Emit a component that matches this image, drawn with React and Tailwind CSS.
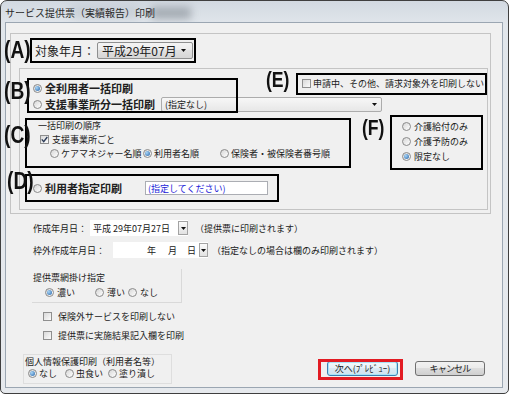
import React from "react";

const JP = "font-['Noto_Sans_CJK_JP','Noto_Sans',sans-serif]";

function Radio({ checked }) {
  return (
    <span className="inline-flex h-[9px] w-[9px] shrink-0 items-center justify-center rounded-full border border-[#8a8a8a] bg-[linear-gradient(135deg,#d6d6d6,#ffffff)]">
      {checked && (
        <span className="h-[5px] w-[5px] rounded-full bg-[radial-gradient(circle_at_35%_35%,#a9d6f7,#2563a8)]" />
      )}
    </span>
  );
}

function Check({ checked }) {
  return (
    <span className="inline-flex h-[9px] w-[9px] shrink-0 items-center justify-center border border-[#8f8f8f] bg-[linear-gradient(135deg,#d9d9d9,#fbfbfb)]">
      {checked && (
        <svg width="7" height="7" viewBox="0 0 7 7">
          <path d="M0.8 3.4 L2.7 5.6 L6.3 1" fill="none" stroke="#2c3b57" strokeWidth="1.4" />
        </svg>
      )}
    </span>
  );
}

function Arrow() {
  return (
    <svg width="5" height="3" viewBox="0 0 5 3">
      <path d="M0 0H5L2.5 3Z" fill="#111" />
    </svg>
  );
}

function DropBtn({ w = "w-[10px]" }) {
  return (
    <span className={`ml-auto flex h-[14px] ${w} items-center justify-center border border-[#a3a3a3] bg-[linear-gradient(#fbfbfb,#e2e2e2)]`}>
      <Arrow />
    </span>
  );
}

export default function App() {
  return (
    <div className={`relative h-[394px] w-[509px] overflow-hidden text-[#202020] ${JP}`}>
      {/* window */}
      <div className="flex h-full w-full flex-col rounded-t-[7px] rounded-b-[5px] border border-[#3f3f3f] bg-[linear-gradient(#d2d9e1,#e1e6eb_24px,#e6e9ed)]">
        {/* title bar */}
        <div className="relative flex h-[21px] shrink-0 items-center overflow-hidden pl-[4px] pt-[3px]">
          <span className="absolute left-[150px] top-[6px] h-[12px] w-[40px] bg-[#7f8790] opacity-60 blur-[4px]" />
          <span className="absolute left-[70px] top-[4px] h-[14px] w-[70px] bg-[#b9c1ca] opacity-50 blur-[5px]" />
          <span className="relative text-[10px] leading-none text-[#2a2a2a]">サービス提供票（実績報告）印刷</span>
        </div>

        {/* client area */}
        <div className="mb-[5px] ml-[4px] mr-[5px] flex flex-1 flex-col border border-[#9ba6b2] bg-[#f0f0f0] text-[9px] leading-none">
          {/* outer group */}
          <div className="ml-[4px] mt-[10px] flex h-[181px] w-[481px] flex-col border border-[#c4c4c4]">
            {/* target month */}
            <div className="ml-[24px] mt-[8px] flex h-[17px] items-center">
              <span className="w-[62px] text-[12px]">対象年月：</span>
              <div className="flex h-[17px] w-[96px] items-center rounded-[2px] border border-[#8e8f8f] bg-[linear-gradient(#f4f4f4,#ececec_45%,#e0e0e0_50%,#d6d6d6)] pl-[4px] text-[12px]">
                平成29年07月
                <span className="ml-auto mr-[6px] flex">
                  <Arrow />
                </span>
              </div>
            </div>

            {/* inner group */}
            <div className="ml-[8px] mt-[9px] flex h-[142px] w-[469px] flex-col border border-[#c4c4c4]">
              {/* row 1 */}
              <div className="mt-[7px] flex h-[20px] items-start">
                <div className="w-[282px] pl-[13px] pt-[6px]">
                  <div className="flex h-[12px] items-center gap-[3px]">
                    <Radio checked />
                    <span className="text-[11px] font-bold">全利用者一括印刷</span>
                  </div>
                </div>
                <div className="pt-[2px]">
                  <div className="flex h-[10px] items-center gap-[2px]">
                    <Check />
                    <span>申請中、その他、請求対象外を印刷しない</span>
                  </div>
                </div>
              </div>

              {/* row 2 */}
              <div className="flex h-[17px] items-center pl-[13px]">
                <div className="flex w-[128px] items-center gap-[3px]">
                  <Radio />
                  <span className="text-[11px] font-bold">支援事業所分一括印刷</span>
                </div>
                <div className="flex h-[15px] w-[221px] items-center rounded-[2px] border border-[#acacac] bg-[linear-gradient(#f7f7f7,#e7e7e7)] pl-[3px]">
                  (指定なし)
                  <span className="ml-auto mr-[4px] flex">
                    <Arrow />
                  </span>
                </div>
              </div>

              {/* row 3 */}
              <div className="flex h-[56px]">
                <div className="flex w-[382px] flex-col pl-[18px] pt-[6px]">
                  <div className="flex h-[12px] items-center">一括印刷の順序</div>
                  <div className="flex h-[16px] items-center gap-[3px] pl-[2px]">
                    <Check checked />
                    <span>支援事業所ごと</span>
                  </div>
                  <div className="flex h-[12px] items-center pl-[12px]">
                    <div className="flex w-[93px] items-center gap-[2px]">
                      <Radio />
                      <span>ケアマネジャー名順</span>
                    </div>
                    <div className="flex w-[77px] items-center gap-[2px]">
                      <Radio checked />
                      <span>利用者名順</span>
                    </div>
                    <div className="flex items-center gap-[2px]">
                      <Radio />
                      <span>保険者・被保険者番号順</span>
                    </div>
                  </div>
                </div>
                <div className="flex flex-col pt-[6px]">
                  <div className="flex h-[15px] items-center gap-[3px]">
                    <Radio />
                    <span>介護給付のみ</span>
                  </div>
                  <div className="flex h-[15px] items-center gap-[3px]">
                    <Radio />
                    <span>介護予防のみ</span>
                  </div>
                  <div className="flex h-[15px] items-center gap-[3px]">
                    <Radio checked />
                    <span>限定なし</span>
                  </div>
                </div>
              </div>

              {/* row 4 */}
              <div className="mt-[7px] flex h-[24px] items-center pl-[13px]">
                <div className="flex w-[112px] items-center gap-[3px]">
                  <Radio />
                  <span className="text-[11px] font-bold">利用者指定印刷</span>
                </div>
                <div className="flex h-[14px] w-[123px] items-center border border-[#abadb3] bg-white pl-[2px] text-[#1b1bd8]">
                  (指定してください)
                </div>
              </div>
            </div>
          </div>

          {/* creation date */}
          <div className="mt-[6px] flex h-[16px] items-center pl-[27px]">
            <span className="w-[57px]">作成年月日：</span>
            <div className="flex h-[16px] w-[98px] items-center bg-white pl-[3px]">
              <span>平成 29年07月27日</span>
              <DropBtn />
            </div>
            <span className="ml-[7px]">（提供票に印刷されます）</span>
          </div>

          {/* outside-frame date */}
          <div className="mt-[6px] flex h-[16px] items-center pl-[27px]">
            <span className="w-[80px]">枠外作成年月日：</span>
            <div className="flex h-[16px] w-[95px] items-center bg-white pl-[34px]">
              <span>年</span>
              <span className="ml-[12px]">月</span>
              <span className="ml-[10px]">日</span>
              <DropBtn w="w-[9px]" />
            </div>
            <span className="ml-[4px]">（指定なしの場合は欄のみ印刷されます）</span>
          </div>

          {/* shading group */}
          <div className="ml-[26px] mt-[11px] flex h-[34px] w-[150px] flex-col border-b border-r border-[#d9d9d9]">
            <div className="flex h-[16px] items-center pl-[1px]">提供票網掛け指定</div>
            <div className="flex h-[14px] items-center pl-[13px]">
              <div className="flex w-[50px] items-center gap-[3px]">
                <Radio checked />
                <span>濃い</span>
              </div>
              <div className="flex w-[33px] items-center gap-[3px]">
                <Radio />
                <span>薄い</span>
              </div>
              <div className="flex items-center gap-[3px]">
                <Radio />
                <span>なし</span>
              </div>
            </div>
          </div>

          {/* checkboxes */}
          <div className="ml-[37px] mt-[6px] flex h-[14px] items-center gap-[6px]">
            <Check />
            <span>保険外サービスを印刷しない</span>
          </div>
          <div className="ml-[37px] mt-[5px] flex h-[14px] items-center gap-[6px]">
            <Check />
            <span>提供票に実施結果記入欄を印刷</span>
          </div>

          {/* bottom row */}
          <div className="mt-[12px] flex items-start">
            <div className="ml-[17px] flex h-[30px] w-[149px] flex-col border border-[#dedede]">
              <div className="flex h-[12px] items-center pl-[1px]">個人情報保護印刷（利用者名等）</div>
              <div className="flex h-[13px] items-center pl-[4px]">
                <div className="flex w-[37px] items-center gap-[2px]">
                  <Radio checked />
                  <span>なし</span>
                </div>
                <div className="flex w-[43px] items-center gap-[2px]">
                  <Radio />
                  <span>虫食い</span>
                </div>
                <div className="flex items-center gap-[2px]">
                  <Radio />
                  <span>塗り潰し</span>
                </div>
              </div>
            </div>
            <div className="ml-auto mr-[17px] mt-[7px] flex gap-[17px]">
              <button className="flex h-[15px] w-[71px] items-center justify-center rounded-[3px] border border-[#3c7fb1] bg-[linear-gradient(#f4f9fc,#e8f2f8_45%,#d9e9f4_50%,#cfe2ef)] text-[9px] leading-none shadow-[inset_0_0_0_1px_#a8e4f7]">
                次へ(ﾌﾟﾚﾋﾞｭｰ)
              </button>
              <button className="flex h-[15px] w-[70px] items-center justify-center rounded-[3px] border border-[#707070] bg-[linear-gradient(#f2f2f2,#ebebeb_45%,#dddddd_50%,#cfcfcf)] text-[9px] leading-none tracking-[-0.8px]">
                キャンセル
              </button>
            </div>
          </div>
        </div>
      </div>

      {/* annotation overlays */}
      <div className="absolute left-[30px] top-[38px] h-[25px] w-[166px] border-2 border-black" />
      <div className="absolute left-[27px] top-[78px] h-[35px] w-[211px] border-2 border-black" />
      <div className="absolute left-[296px] top-[73px] h-[22px] w-[191px] border-2 border-black" />
      <div className="absolute left-[25px] top-[118px] h-[50px] w-[326px] border-2 border-black" />
      <div className="absolute left-[390px] top-[115px] h-[55px] w-[93px] border-2 border-black" />
      <div className="absolute left-[25px] top-[174px] h-[28px] w-[254px] border-2 border-black" />
      <div className="absolute left-[318px] top-[359px] h-[21px] w-[85px] border-[3px] border-[#e21b23]" />

      <span className="absolute left-[4px] top-[38px] origin-left scale-x-[0.8] font-['Liberation_Sans',sans-serif] text-[24px] font-bold leading-none text-[#111]">(A)</span>
      <span className="absolute left-[4px] top-[79px] origin-left scale-x-[0.8] font-['Liberation_Sans',sans-serif] text-[24px] font-bold leading-none text-[#111]">(B)</span>
      <span className="absolute left-[4px] top-[123px] origin-left scale-x-[0.8] font-['Liberation_Sans',sans-serif] text-[24px] font-bold leading-none text-[#111]">(C)</span>
      <span className="absolute left-[7px] top-[169px] origin-left scale-x-[0.8] font-['Liberation_Sans',sans-serif] text-[24px] font-bold leading-none text-[#111]">(D)</span>
      <span className="absolute left-[266px] top-[69px] origin-left scale-x-[0.8] font-['Liberation_Sans',sans-serif] text-[22px] font-bold leading-none text-[#111]">(E)</span>
      <span className="absolute left-[362px] top-[117px] origin-left scale-x-[0.8] font-['Liberation_Sans',sans-serif] text-[22px] font-bold leading-none text-[#111]">(F)</span>
    </div>
  );
}
